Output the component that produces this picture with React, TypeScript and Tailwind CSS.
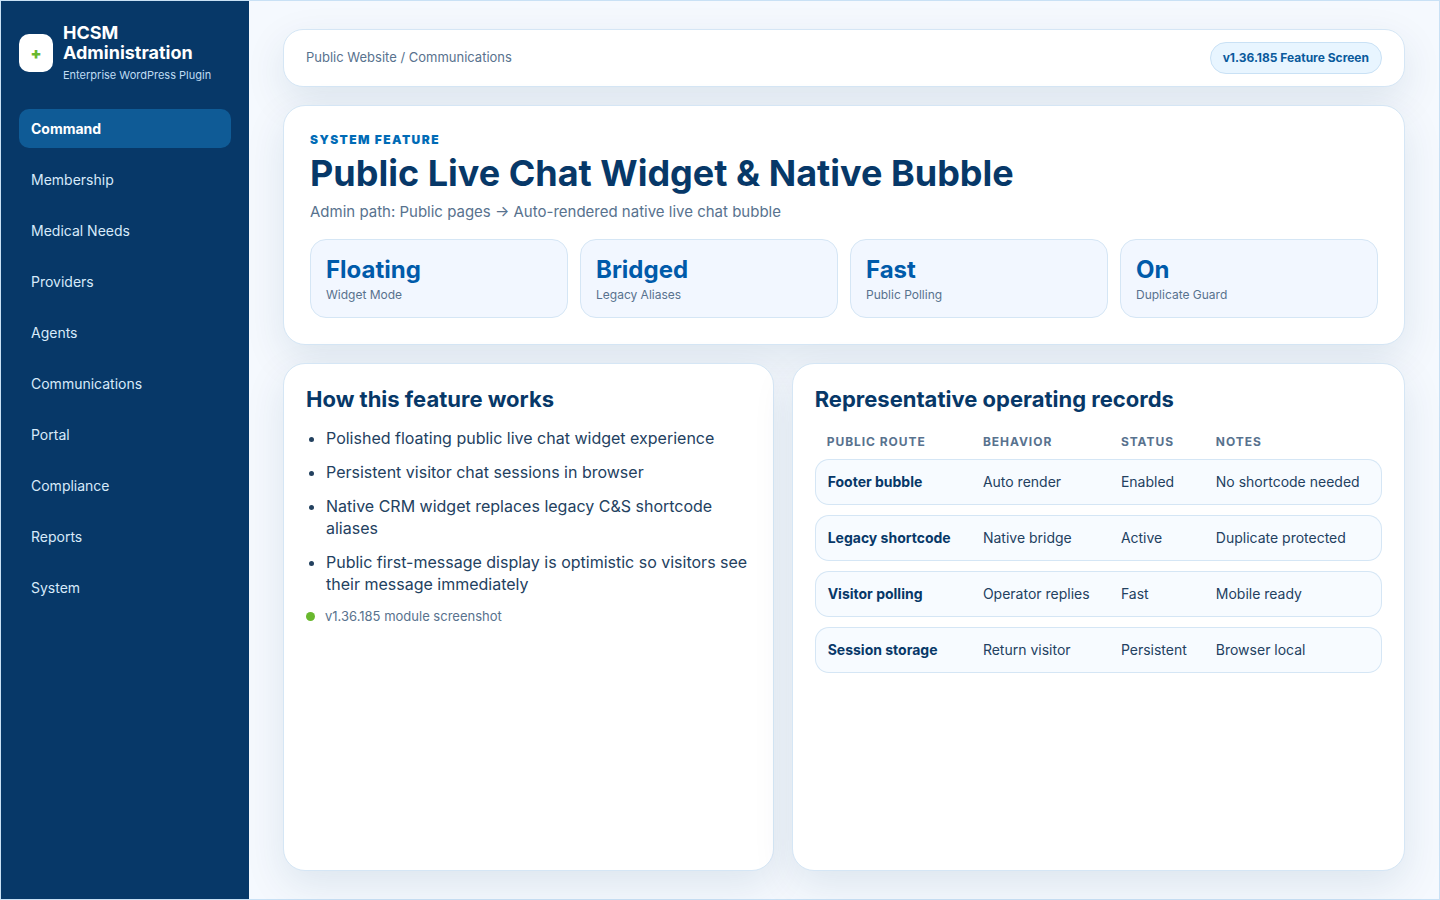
import React from 'react'
import { clsx } from 'clsx'

interface Stat {
  value: string
  label: string
}

interface OperatingRecord {
  route: string
  behavior: string
  status: string
  notes: string
}

const NAV_ITEMS = [
  'Command',
  'Membership',
  'Medical Needs',
  'Providers',
  'Agents',
  'Communications',
  'Portal',
  'Compliance',
  'Reports',
  'System',
]

const STATS: Stat[] = [
  { value: 'Floating', label: 'Widget Mode' },
  { value: 'Bridged', label: 'Legacy Aliases' },
  { value: 'Fast', label: 'Public Polling' },
  { value: 'On', label: 'Duplicate Guard' },
]

const FEATURES = [
  'Polished floating public live chat widget experience',
  'Persistent visitor chat sessions in browser',
  'Native CRM widget replaces legacy C&S shortcode aliases',
  'Public first-message display is optimistic so visitors see their message immediately',
]

const COLUMNS = ['Public Route', 'Behavior', 'Status', 'Notes']

const RECORDS: OperatingRecord[] = [
  { route: 'Footer bubble', behavior: 'Auto render', status: 'Enabled', notes: 'No shortcode needed' },
  { route: 'Legacy shortcode', behavior: 'Native bridge', status: 'Active', notes: 'Duplicate protected' },
  { route: 'Visitor polling', behavior: 'Operator replies', status: 'Fast', notes: 'Mobile ready' },
  { route: 'Session storage', behavior: 'Return visitor', status: 'Persistent', notes: 'Browser local' },
]

const CARD = 'border border-[#d5e6f5] bg-white shadow-[0_14px_40px_rgba(7,55,99,0.1)]'

function Sidebar() {
  return (
    <aside className="w-[248px] shrink-0 bg-[#073868] px-[18px] py-[22px] text-white">
      {/* Brand */}
      <div className="mb-[26px] flex items-center gap-[10px]">
        <div className="flex h-[38px] w-[34px] shrink-0 items-center justify-center rounded-[10px] bg-white text-base font-black text-[#69b82e]">
          +
        </div>
        <div>
          <div className="text-lg leading-5 font-bold">HCSM Administration</div>
          <div className="mt-1 text-[11px] leading-4 text-[#bfdcf3]">Enterprise WordPress Plugin</div>
        </div>
      </div>

      <nav className="flex flex-col gap-3">
        {NAV_ITEMS.map((item, index) => (
          <a
            key={item}
            href="#"
            className={clsx(
              'rounded-[10px] px-3 py-[10px] text-sm leading-[19px]',
              index === 0 ? 'bg-[#0f5b96] font-bold text-white' : 'text-[#d7eafa]'
            )}
          >
            {item}
          </a>
        ))}
      </nav>
    </aside>
  )
}

function TopBar() {
  return (
    <header className={clsx(CARD, 'flex items-center justify-between rounded-[20px] px-[22px] py-3')}>
      <span className="text-[13px] text-[#58728e]">Public Website / Communications</span>
      <span className="rounded-full border border-[#c9e1f5] bg-[#e8f5ff] px-3 py-2 text-xs leading-[14px] font-bold text-[#0a5a9c]">
        v1.36.185 Feature Screen
      </span>
    </header>
  )
}

function Hero() {
  return (
    <section className={clsx(CARD, 'rounded-[22px] p-[26px]')}>
      <div className="text-xs leading-[15px] font-black tracking-[0.12em] text-[#006bb6] uppercase">System Feature</div>
      <h1 className="mt-1 text-[36px] leading-[44px] font-bold text-[#073868]">
        Public Live Chat Widget &amp; Native Bubble
      </h1>
      <p className="mt-2 text-[15px] leading-[18px] text-[#58728e]">
        Admin path: Public pages → Auto-rendered native live chat bubble
      </p>

      <div className="mt-[18px] grid grid-cols-4 gap-3">
        {STATS.map((stat) => (
          <div key={stat.label} className="rounded-2xl border border-[#d5e6f5] bg-[#f2f7ff] px-[15px] py-[15px]">
            <div className="text-2xl leading-[30px] font-bold text-[#005baa]">{stat.value}</div>
            <div className="mt-[2px] text-xs leading-[15px] text-[#58728e]">{stat.label}</div>
          </div>
        ))}
      </div>
    </section>
  )
}

function FeaturePanel() {
  return (
    <section className={clsx(CARD, 'rounded-[22px] p-[22px]')}>
      <h2 className="text-[22px] leading-[27px] font-bold text-[#073868]">How this feature works</h2>
      <ul className="mt-[14px] flex list-disc flex-col gap-3 pl-5 text-base leading-[22px] text-[#23415f]">
        {FEATURES.map((feature) => (
          <li key={feature}>{feature}</li>
        ))}
      </ul>
      <div className="mt-[13px] flex items-center gap-[10px] text-[13px] leading-4 text-[#58728e]">
        <span className="size-[9px] rounded-full bg-[#69b82e]" />
        v1.36.185 module screenshot
      </div>
    </section>
  )
}

function RecordsPanel() {
  const cell = 'border-y border-[#d5e6f5] bg-[#f7fbff] px-3 py-[13px]'

  return (
    <section className={clsx(CARD, 'rounded-[22px] p-[22px]')}>
      <h2 className="text-[22px] leading-[27px] font-bold text-[#073868]">Representative operating records</h2>
      <table className="mt-3 w-full border-separate border-spacing-x-0 border-spacing-y-[10px] text-left text-sm leading-[18px] text-[#23415f]">
        <thead>
          <tr>
            {COLUMNS.map((column) => (
              <th key={column} className="px-3 text-xs leading-[14px] font-bold tracking-[0.08em] text-[#58728e] uppercase">
                {column}
              </th>
            ))}
          </tr>
        </thead>
        <tbody>
          {RECORDS.map((record) => (
            <tr key={record.route}>
              <td className={clsx(cell, 'rounded-l-[14px] border-l font-bold text-[#073868]')}>{record.route}</td>
              <td className={cell}>{record.behavior}</td>
              <td className={cell}>{record.status}</td>
              <td className={clsx(cell, 'rounded-r-[14px] border-r')}>{record.notes}</td>
            </tr>
          ))}
        </tbody>
      </table>
    </section>
  )
}

export default function App() {
  return (
    <div className="flex min-h-screen border border-[#c9e1f5] bg-[#f5f9fe] font-[Inter,sans-serif]">
      <Sidebar />
      <main className="flex min-w-0 flex-1 flex-col gap-[18px] px-[34px] py-7">
        <TopBar />
        <Hero />
        <div className="grid flex-1 grid-cols-[4fr_5fr] gap-[18px]">
          <FeaturePanel />
          <RecordsPanel />
        </div>
      </main>
    </div>
  )
}
